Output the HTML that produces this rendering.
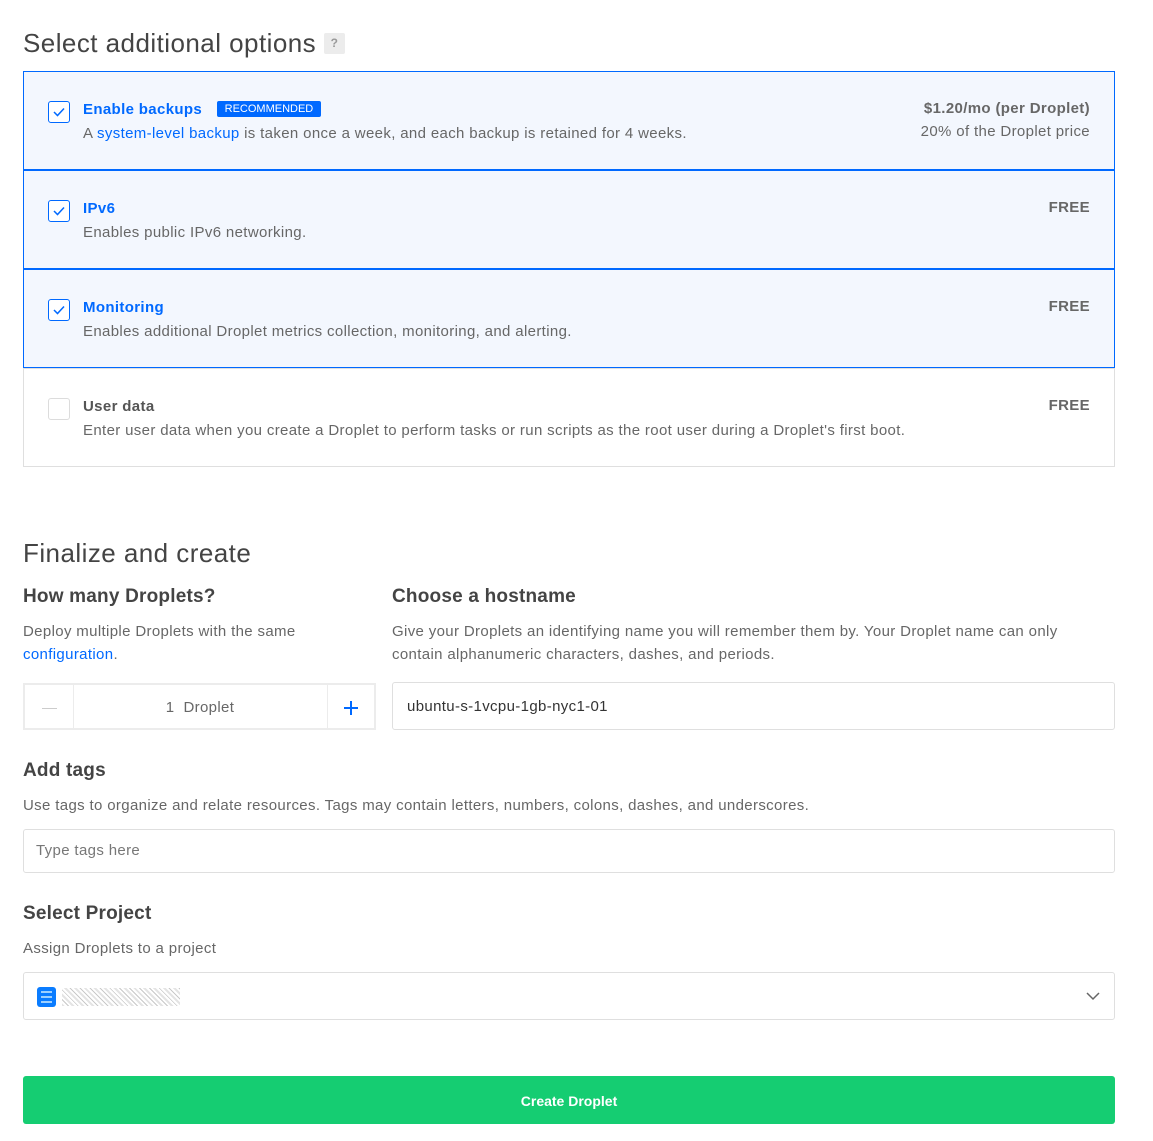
<!DOCTYPE html>
<html><head><meta charset="utf-8"><style>
*{box-sizing:border-box;margin:0;padding:0}
body{width:1153px;height:1141px;background:#fff;font-family:"Liberation Sans",sans-serif;color:#676767;position:relative;overflow:hidden;letter-spacing:0.35px}
.a{position:absolute}
.box{position:absolute;left:23px;width:1092px;height:99px;background:#f3f7fe;border:1px solid #0069ff}
.box.off{background:#fff;border-color:#dfdfdf}
.cb{position:absolute;left:24px;top:29px;width:22px;height:22px;border:1.5px solid #0069ff;border-radius:3px;background:#fff}
.off .cb{border:1px solid #dcdcdc}
.cb svg{position:absolute;left:4px;top:5px}
.t{position:absolute;left:59px;top:29px;font-size:15px;font-weight:bold;color:#0069ff}
.off .t{color:#555}
.d{position:absolute;left:59px;top:53px;font-size:15px;color:#676767}
.r{position:absolute;right:24px;top:28px;font-size:15px;font-weight:bold;color:#676767;text-align:right}
h2{position:absolute;font-weight:normal;color:#444;font-size:26px;letter-spacing:0.45px}
h3{position:absolute;font-size:19px;color:#444;font-weight:bold;letter-spacing:0.2px}
.p{position:absolute;font-size:15px;line-height:23px;color:#676767}
.in{position:absolute;border:1px solid #dfdfdf;border-radius:3px;font-size:15px}
a{color:#0069ff;text-decoration:none}
</style></head><body>
<h2 style="left:23px;top:28px">Select additional options</h2>
<div class="a" style="left:324px;top:33px;width:21px;height:21px;background:#ececec;border-radius:2px;color:#999;font-size:12px;font-weight:bold;text-align:center;line-height:21px">?</div>

<div class="box" style="top:71px">
<div class="cb"><svg width="12" height="10"><path d="M1 5 L4.5 8.5 L11 1.5" stroke="#0069ff" stroke-width="1.5" fill="none"/></svg></div>
<div class="t">Enable backups <span style="display:inline-block;margin-left:10px;background:#0069ff;color:#fff;font-size:11px;font-weight:normal;padding:2px 8px;border-radius:2px;vertical-align:2px;letter-spacing:0">RECOMMENDED</span></div>
<div class="d">A <a>system-level backup</a> is taken once a week, and each backup is retained for 4 weeks.</div>
<div class="r">$1.20/mo (per Droplet)<br><span style="font-weight:normal;line-height:30px">20% of the Droplet price</span></div>
</div>
<div class="box" style="top:170px">
<div class="cb"><svg width="12" height="10"><path d="M1 5 L4.5 8.5 L11 1.5" stroke="#0069ff" stroke-width="1.5" fill="none"/></svg></div>
<div class="t">IPv6</div><div class="d">Enables public IPv6 networking.</div><div class="r">FREE</div>
</div>
<div class="box" style="top:269px">
<div class="cb"><svg width="12" height="10"><path d="M1 5 L4.5 8.5 L11 1.5" stroke="#0069ff" stroke-width="1.5" fill="none"/></svg></div>
<div class="t">Monitoring</div><div class="d">Enables additional Droplet metrics collection, monitoring, and alerting.</div><div class="r">FREE</div>
</div>
<div class="box off" style="top:368px">
<div class="cb"></div>
<div class="t">User data</div><div class="d">Enter user data when you create a Droplet to perform tasks or run scripts as the root user during a Droplet's first boot.</div><div class="r">FREE</div>
</div>

<h2 style="left:23px;top:538px">Finalize and create</h2>
<h3 style="left:23px;top:586px">How many Droplets?</h3>
<div class="p" style="left:23px;top:620px">Deploy multiple Droplets with the same<br><a>configuration</a>.</div>
<div class="in" style="left:23px;top:683px;width:353px;height:47px;border-width:2px;border-color:#ececec;border-radius:0">
<div class="a" style="left:48px;top:0;width:1px;height:43px;background:#ececec"></div>
<div class="a" style="left:302px;top:0;width:1px;height:43px;background:#ececec"></div>
<div class="a" style="left:17px;top:23px;width:15px;height:1px;background:#ccc"></div>
<div class="a" style="left:48px;width:254px;top:14px;text-align:center;color:#676767">1&nbsp; Droplet</div>
<div class="a" style="left:319px;top:16px;width:14px;height:14px"><div class="a" style="left:0;top:6px;width:14px;height:1.5px;background:#0069ff"></div><div class="a" style="left:6px;top:0;width:1.5px;height:14px;background:#0069ff"></div></div>
</div>
<h3 style="left:392px;top:586px">Choose a hostname</h3>
<div class="p" style="left:392px;top:620px">Give your Droplets an identifying name you will remember them by. Your Droplet name can only<br>contain alphanumeric characters, dashes, and periods.</div>
<div class="in" style="left:392px;top:682px;width:723px;height:48px;padding:15px 14px;color:#333">ubuntu-s-1vcpu-1gb-nyc1-01</div>

<h3 style="left:23px;top:760px">Add tags</h3>
<div class="p" style="left:23px;top:794px">Use tags to organize and relate resources. Tags may contain letters, numbers, colons, dashes, and underscores.</div>
<div class="in" style="left:23px;top:829px;width:1092px;height:44px;padding:12px 12px;color:#777">Type tags here</div>

<h3 style="left:23px;top:903px">Select Project</h3>
<div class="p" style="left:23px;top:937px">Assign Droplets to a project</div>
<div class="in" style="left:23px;top:972px;width:1092px;height:48px">
<div class="a" style="left:13px;top:14px;width:19px;height:20px;background:#0a7cff;border-radius:3px">
<div class="a" style="left:4px;top:4px;width:11px;height:2px;background:#9cd0ff"></div>
<div class="a" style="left:4px;top:9px;width:11px;height:2px;background:#9cd0ff"></div>
<div class="a" style="left:4px;top:14px;width:11px;height:2px;background:#9cd0ff"></div></div>
<div class="a" style="left:38px;top:15px;width:118px;height:18px;background:repeating-linear-gradient(45deg,#ddd 0 2px,#fff 2px 4px,#bbb 4px 5px,#fff 5px 7px);opacity:.8"></div>
<svg class="a" style="left:1062px;top:19px" width="14" height="9"><path d="M1 1 L7 7 L13 1" stroke="#666" stroke-width="1.5" fill="none"/></svg>
</div>

<div class="a" style="left:23px;top:1076px;width:1092px;height:48px;background:#15cd72;border-radius:3px;color:#fff;font-size:14px;font-weight:bold;text-align:center;line-height:50px;letter-spacing:0">Create Droplet</div>
</body></html>
